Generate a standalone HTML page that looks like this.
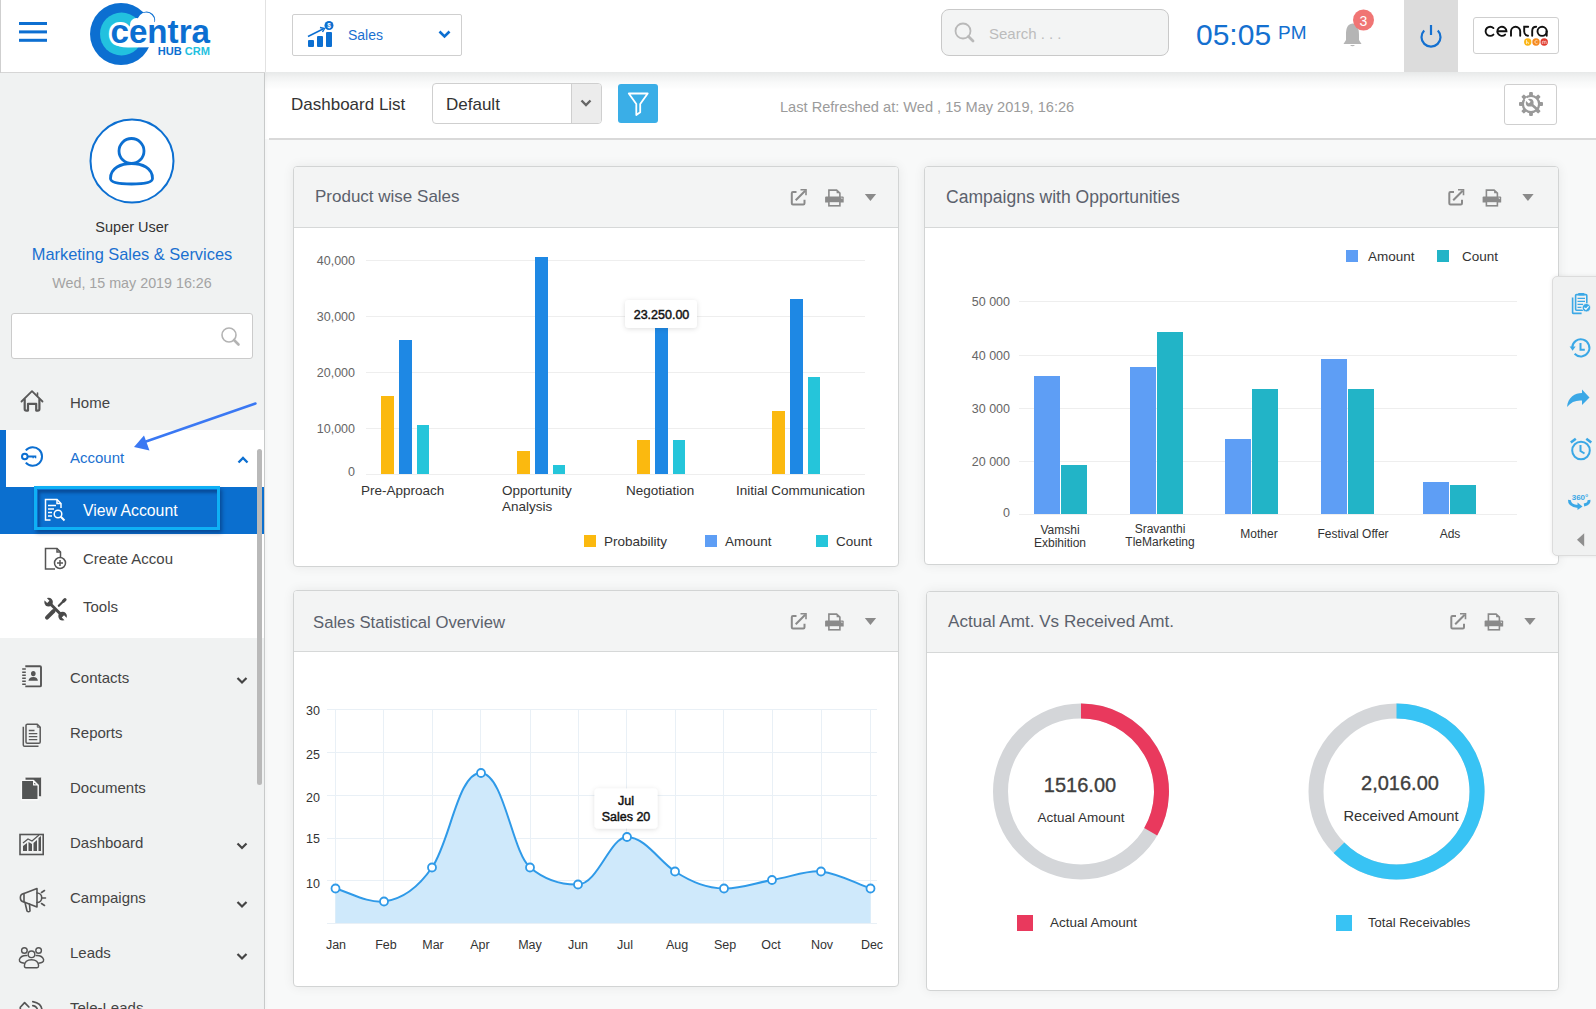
<!DOCTYPE html>
<html><head><meta charset="utf-8">
<style>
*{margin:0;padding:0;box-sizing:border-box}
html,body{width:1596px;height:1009px;overflow:hidden;background:#f8f9f9;font-family:"Liberation Sans",sans-serif;color:#333}
.a{position:absolute}
.t{position:absolute;white-space:nowrap;line-height:1}
.card{position:absolute;background:#fff;border:1px solid #d2d4d4;border-radius:4px;box-shadow:0 0 12px rgba(0,0,0,0.07);overflow:hidden}
.ch{position:absolute;left:0;top:0;right:0;background:#f3f4f4;border-bottom:1px solid #d6d8d8}
.ttl{position:absolute;font-size:17px;color:#5b616c;white-space:nowrap;line-height:1}
.mt{position:absolute;white-space:nowrap;line-height:1;font-size:15px;color:#444}
svg{position:absolute;overflow:visible}
</style></head>
<body>
<!-- HEADER -->
<div class="a" style="left:0;top:0;width:1596px;height:72px;background:#fff"></div>
<div class="a" style="left:0;top:72px;width:265px;height:1px;background:#d6d6d6"></div>
<div class="a" style="left:265px;top:0;width:1px;height:72px;background:#e2e2e2"></div>
<!-- hamburger -->
<svg style="left:0;top:0" width="60" height="72">
  <rect x="19" y="22" width="28" height="3" fill="#0d6fd1"/>
  <rect x="19" y="30.4" width="28" height="3" fill="#0d6fd1"/>
  <rect x="19" y="38.8" width="28" height="3" fill="#0d6fd1"/>
</svg>
<div class="a" style="left:0;top:0;width:1px;height:73px;background:#cfcfcf"></div>
<!-- logo -->
<svg style="left:0;top:0" width="266" height="72">
  <circle cx="121" cy="34" r="31" fill="#0c6fd1"/>
  <circle cx="121.5" cy="34" r="21.5" fill="#22c1df"/>
  <circle cx="146.6" cy="20" r="8.6" fill="#0c6fd1"/>
  <circle cx="146" cy="21" r="8.4" fill="#fff"/>
  <circle cx="121" cy="34" r="7" fill="#fff"/>
  <circle cx="136.5" cy="24.5" r="6.5" fill="#fff"/>
  <path d="M113 34 L113 43 Q118 47.6 128 47.6 L155 47.2 L149 36 Z" fill="#fff"/>
  <text x="110.5" y="43.2" font-family="Liberation Sans" font-weight="bold" font-size="33" fill="#0c6fd1" stroke="#fff" stroke-width="6" paint-order="stroke" stroke-linejoin="round" textLength="99.5" lengthAdjust="spacingAndGlyphs">centra</text>
  <text x="157.8" y="54.6" font-family="Liberation Sans" font-weight="bold" font-size="10.3" fill="#0c6fd1" textLength="24" lengthAdjust="spacingAndGlyphs">HUB</text>
  <text x="184.8" y="54.6" font-family="Liberation Sans" font-weight="bold" font-size="10.3" fill="#22c1df" textLength="25.2" lengthAdjust="spacingAndGlyphs">CRM</text>
</svg>
<!-- sales dropdown -->
<div class="a" style="left:292px;top:14px;width:170px;height:42px;border:1px solid #cfcfcf;border-radius:2px;background:#fff"></div>
<svg style="left:0;top:0" width="480" height="72">
  <rect x="308" y="40" width="6" height="7" rx="1" fill="#0c6fd1"/>
  <rect x="317" y="36" width="6" height="11" rx="1" fill="#0c6fd1"/>
  <rect x="326" y="32" width="6" height="15" rx="1" fill="#0c6fd1"/>
  <path d="M308 36.5 L323 29" stroke="#0c6fd1" stroke-width="1.5" fill="none"/>
  <path d="M320 27.5 L324.5 28.5 L322.5 32" stroke="#0c6fd1" stroke-width="1.5" fill="none"/>
  <circle cx="329" cy="25.5" r="4.5" fill="#0c6fd1"/>
  <text x="329" y="28" font-family="Liberation Sans" font-weight="bold" font-size="6.5" fill="#fff" text-anchor="middle">$</text>
  <path d="M439.5 31.5 L444.5 36.5 L449.5 31.5" stroke="#0c6fd1" stroke-width="2.6" fill="none"/>
</svg>
<div class="t" style="left:348px;top:28px;font-size:14px;color:#1a70d0">Sales</div>
<!-- search -->
<div class="a" style="left:941px;top:9px;width:228px;height:47px;border:1px solid #c9c9c9;border-radius:8px;background:#f3f4f4"></div>
<svg style="left:0;top:0" width="1200" height="72">
  <circle cx="963" cy="31" r="7.5" stroke="#b9b9b9" stroke-width="1.8" fill="none"/>
  <path d="M968.5 36.5 L973 41" stroke="#b9b9b9" stroke-width="2.8" stroke-linecap="round"/>
</svg>
<div class="t" style="left:989px;top:26px;font-size:15px;color:#bcbcbc;letter-spacing:0px">Search . . .</div>
<!-- time -->
<div class="t" style="left:1196px;top:20px;font-size:30px;color:#1470d0">05:05</div>
<div class="t" style="left:1278px;top:23px;font-size:19px;color:#1470d0">PM</div>
<!-- bell -->
<svg style="left:0;top:0" width="1400" height="72">
  <path d="M1352.5 23.5 C1347 24 1346 29 1346 35 L1346 40 L1343.5 44 L1361.5 44 L1359 40 L1359 35 C1359 29 1358 24 1352.5 23.5 Z" fill="#b5b5b5"/>
  <path d="M1350 45 Q1352.5 47.5 1355 45 Z" fill="#b5b5b5"/>
  <circle cx="1363.5" cy="20" r="10.5" fill="#f07574"/>
  <text x="1363.5" y="25.5" font-family="Liberation Sans" font-size="14" fill="#fff" text-anchor="middle">3</text>
</svg>
<!-- power -->
<div class="a" style="left:1404px;top:0;width:54px;height:72px;background:#dcdcdc"></div>
<svg style="left:0;top:0" width="1596" height="72">
  <path d="M1424.2 30.5 A9.5 9.5 0 1 0 1437.8 30.5" stroke="#1470d0" stroke-width="2.2" fill="none"/>
  <path d="M1431 25 L1431 35" stroke="#1470d0" stroke-width="2.2"/>
</svg>
<!-- centra logo box -->
<div class="a" style="left:1473px;top:17px;width:86px;height:37px;border:1px solid #cfcfcf;border-radius:3px;background:#fff"></div>
<svg style="left:0;top:0" width="1596" height="72">
  <g stroke="#111" stroke-width="1.9" fill="none" stroke-linecap="round">
    <path d="M1493.45 28.05 A4.6 4.6 0 1 0 1493.45 34.55"/>
    <path d="M1497.3 31.3 L1506.5 31.3 A4.6 4.6 0 1 0 1505.15 34.55"/>
    <path d="M1511 35.8 L1511 31.3 A4.6 4.6 0 0 1 1520.2 31.3 L1520.2 35.8"/>
    <path d="M1528.2 26.8 L1524.2 26.8 L1524.2 31.5 Q1524.2 35 1528 35.8"/>
    <path d="M1532.2 35.8 L1532.2 31 Q1532.2 26.8 1536.2 26.8"/>
    <circle cx="1542.1" cy="31.3" r="4.6"/>
    <path d="M1546.7 31.3 L1546.7 35.8"/>
  </g>
  <circle cx="1527.7" cy="42" r="3.7" fill="#fbb514"/>
  <circle cx="1536" cy="42" r="3.7" fill="#f58a1f"/>
  <circle cx="1544.2" cy="42" r="3.7" fill="#e0392b"/>
  <g stroke="#fff" stroke-width="0.8" fill="none" opacity="0.8">
    <path d="M1526.5 40 L1526.5 44 M1526.5 42.3 Q1528.5 41 1528.5 44"/>
    <path d="M1537.5 40.8 A1.6 1.6 0 1 0 1537.5 43.2"/>
    <path d="M1542.3 44 L1542.3 41.5 Q1543.3 40.8 1544.2 41.5 L1544.2 44 M1544.2 41.5 Q1545.2 40.8 1546.1 41.5 L1546.1 44"/>
  </g>
</svg>

<!-- MAIN TOOLBAR -->
<div class="a" style="left:265px;top:72px;width:1331px;height:67px;background:linear-gradient(#e7e9e9 0px,#f1f2f2 5px,#f9fafa 11px,#fdfdfd 16px,#fff 17px)"></div>
<div class="a" style="left:269px;top:138px;width:1327px;height:2px;background:#d9d9d9"></div>
<div class="t" style="left:291px;top:96px;font-size:17px;color:#333">Dashboard List</div>
<div class="a" style="left:432px;top:83px;width:170px;height:41px;border:1px solid #cfcfcf;border-radius:4px;background:#fff;overflow:hidden">
  <div class="a" style="left:138px;top:0;width:32px;height:41px;background:#ececec;border-left:1px solid #cfcfcf"></div>
</div>
<div class="t" style="left:446px;top:96px;font-size:17px;color:#333">Default</div>
<svg style="left:0;top:0" width="700" height="140">
  <path d="M581.5 100.5 L586 105 L590.5 100.5" stroke="#666" stroke-width="2.4" fill="none"/>
</svg>
<div class="a" style="left:618px;top:84px;width:40px;height:39px;background:#3aaee7;border-radius:3px"></div>
<svg style="left:0;top:0" width="700" height="140">
  <path d="M628.8 93.5 L647.7 93.5 L640.2 104 L640.2 112.3 L636.3 115 L636.3 104 Z" stroke="#fff" stroke-width="1.8" fill="none" stroke-linejoin="round"/>
</svg>
<div class="t" style="left:780px;top:100px;font-size:14.6px;color:#9b9b9b">Last Refreshed at: Wed , 15 May 2019, 16:26</div>
<div class="a" style="left:1504px;top:84px;width:53px;height:41px;border:1px solid #cfcfcf;border-radius:3px;background:#fff"></div>
<svg style="left:0;top:0" width="1596" height="140">
  <g transform="translate(1531,104)" fill="#999">
    <circle r="9.3"/>
    <g>
      <rect x="-1.9" y="-12" width="3.8" height="5" rx="1"/>
      <rect x="-1.9" y="-12" width="3.8" height="5" rx="1" transform="rotate(45)"/>
      <rect x="-1.9" y="-12" width="3.8" height="5" rx="1" transform="rotate(90)"/>
      <rect x="-1.9" y="-12" width="3.8" height="5" rx="1" transform="rotate(135)"/>
      <rect x="-1.9" y="-12" width="3.8" height="5" rx="1" transform="rotate(180)"/>
      <rect x="-1.9" y="-12" width="3.8" height="5" rx="1" transform="rotate(225)"/>
      <rect x="-1.9" y="-12" width="3.8" height="5" rx="1" transform="rotate(270)"/>
      <rect x="-1.9" y="-12" width="3.8" height="5" rx="1" transform="rotate(315)"/>
    </g>
    <circle r="7" fill="#fff"/>
    <circle cx="-1.3" cy="-1.3" r="3.9"/>
    <path d="M-1.3 -1.3 L-5.5 -5.5" stroke="#fff" stroke-width="2.6"/>
    <path d="M-0.5 -0.5 L5.8 5" stroke="#999" stroke-width="2.6"/>
  </g>
</svg>
<!-- SIDEBAR -->
<div class="a" style="left:0;top:73px;width:265px;height:936px;background:#f0f2f2"></div>
<div class="a" style="left:264px;top:73px;width:1px;height:936px;background:#c8caca;box-shadow:1px 0 3px rgba(0,0,0,0.06)"></div>
<!-- avatar -->
<svg style="left:0;top:0" width="265" height="300">
  <circle cx="132" cy="161" r="41.5" fill="#fff" stroke="#0c6fd1" stroke-width="2"/>
  <circle cx="131.5" cy="151" r="12.5" fill="none" stroke="#0c6fd1" stroke-width="2.8"/>
  <path d="M110.5 178.5 C110.5 168 121 163.5 131.5 163.5 C142 163.5 152.5 168 152.5 178.5 C152.5 183 142 184 131.5 184 C121 184 110.5 183 110.5 178.5 Z" fill="none" stroke="#0c6fd1" stroke-width="2.8"/>
</svg>
<div class="t" style="left:0;width:264px;text-align:center;top:220px;font-size:14.5px;color:#333">Super User</div>
<div class="t" style="left:0;width:264px;text-align:center;top:246px;font-size:16.4px;color:#1a70d0">Marketing Sales &amp; Services</div>
<div class="t" style="left:0;width:264px;text-align:center;top:276px;font-size:14.3px;color:#a3a3a3">Wed, 15 may 2019 16:26</div>
<!-- side search -->
<div class="a" style="left:11px;top:313px;width:242px;height:46px;border:1px solid #cbcbcb;border-radius:3px;background:#fff"></div>
<svg style="left:0;top:0" width="265" height="400">
  <circle cx="229" cy="335" r="7" stroke="#b3b3b3" stroke-width="1.6" fill="none"/>
  <path d="M234 340 L238.5 344.5" stroke="#b3b3b3" stroke-width="2.6" stroke-linecap="round"/>
</svg>
<!-- Home -->
<svg style="left:0;top:0" width="265" height="1009">
  <g stroke="#5a5a5a" fill="none" stroke-linejoin="round" stroke-linecap="round">
    <path d="M21.5 401.5 L32 391.2 L42.5 401.5" stroke-width="1.8"/>
    <path d="M24.7 399.5 L24.7 409 Q24.7 410.6 26.3 410.6 L28 410.6 L28 403.8 L36.2 403.8 L36.2 410.6 L37.8 410.6 Q39.4 410.6 39.4 409 L39.4 399.5" stroke-width="2.2"/>
    <path d="M37.5 393 L37.5 395.5" stroke-width="1.6"/>
  </g>
</svg>
<div class="mt" style="left:70px;top:395px">Home</div>
<!-- Account section (white) -->
<div class="a" style="left:0;top:430px;width:264px;height:208px;background:#fff"></div>
<div class="a" style="left:0;top:430px;width:6px;height:57px;background:#0c6fd1"></div>
<svg style="left:0;top:0" width="265" height="1009">
  <g stroke="#0c6fd1" stroke-width="2" fill="none">
    <path d="M25.8 450.3 A9.3 9.3 0 1 1 25.8 462.7"/>
    <circle cx="24.8" cy="456.5" r="2.8"/>
  </g>
  <path d="M27.5 455.5 L36.3 455.5 L36.3 458.3 L35 458.3 L35 457.5 L33.8 457.5 L33.8 458.3 L32.5 458.3 L32.5 457.5 L27.5 457.5 Z" fill="#0c6fd1"/>
</svg>
<div class="mt" style="left:70px;top:450px;color:#1a70d0">Account</div>
<svg style="left:0;top:0" width="265" height="1009">
  <path d="M238.5 462.5 L243 458 L247.5 462.5" stroke="#0c6fd1" stroke-width="2.4" fill="none"/>
</svg>
<!-- View Account -->
<div class="a" style="left:0;top:487px;width:264px;height:47px;background:#0b6fcf"></div>
<div class="a" style="left:34px;top:486px;width:186px;height:44px;border:3.5px solid #0fb0f5;box-shadow:2px 3px 4px rgba(0,0,40,0.35);background:#0b6fcf"></div>
<div class="a" style="left:37.5px;top:489.5px;width:179px;height:37px;box-shadow:inset 2px 3px 3px rgba(0,0,40,0.3)"></div>
<svg style="left:0;top:0" width="265" height="1009">
  <g stroke="#fff" stroke-width="1.5" fill="none">
    <path d="M50.5 520 L45.5 520 L45.5 499.5 L57 499.5 L61 503.5 L61 508"/>
    <path d="M57 499.5 L57 503.5 L61 503.5"/>
    <path d="M48 505.5 L56 505.5 M48 509 L54 509 M48 512.5 L52 512.5 M48 516 L52 516"/>
    <circle cx="58" cy="514" r="3.8"/>
    <path d="M60.8 516.8 L64.5 520.5" stroke-width="2"/>
  </g>
</svg>
<div class="mt" style="left:83px;top:503px;color:#fff;font-size:15.8px">View Account</div>
<!-- Create Account -->
<svg style="left:0;top:0" width="265" height="1009">
  <g stroke="#555" stroke-width="1.5" fill="none">
    <path d="M55 569 L45.5 569 L45.5 548.5 L57 548.5 L60.5 552 L60.5 557"/>
    <path d="M57 548.5 L57 552 L60.5 552"/>
    <circle cx="60" cy="563" r="5.5"/>
    <path d="M60 560 L60 566 M57 563 L63 563"/>
  </g>
</svg>
<div class="mt" style="left:83px;top:551px">Create Accou</div>
<!-- Tools -->
<svg style="left:0;top:0" width="265" height="1009">
  <g fill="#4a4a4a" stroke="none">
    <circle cx="48.6" cy="602.1" r="4.3"/>
    <circle cx="62.6" cy="616.1" r="4.3"/>
  </g>
  <path d="M49 602.5 L62.2 615.7" stroke="#4a4a4a" stroke-width="3"/>
  <path d="M48.3 601.8 L44 597.5 M62.9 616.4 L67.2 620.7" stroke="#fff" stroke-width="3.2"/>
  <path d="M64.8 599.8 L58.8 605.8" stroke="#4a4a4a" stroke-width="2.2" stroke-linecap="round"/>
  <path d="M65 599.6 L63.5 601.1" stroke="#4a4a4a" stroke-width="3.2" stroke-linecap="round"/>
  <path d="M53.6 611 L47 617.6" stroke="#4a4a4a" stroke-width="4" stroke-linecap="round"/>
</svg>
<div class="mt" style="left:83px;top:599px">Tools</div>
<!-- scrollbar -->
<div class="a" style="left:257px;top:449px;width:5px;height:336px;background:#b9b9b9;border-radius:3px"></div>
<!-- Contacts -->
<svg style="left:0;top:0" width="265" height="1009">
  <path d="M25.3 666.2 L40 666.2 Q41 666.2 41 667.2 L41 685.4 Q41 686.4 40 686.4 L25.3 686.4" stroke="#555" stroke-width="1.9" fill="none"/>
  <path d="M22.2 669.1 H25.8 M22.2 672.2 H25.8 M22.2 675.2 H25.8 M22.2 678.2 H25.8 M22.2 681.2 H25.8 M22.2 684.2 H25.8" stroke="#555" stroke-width="1.5"/>
  <ellipse cx="33.3" cy="673.6" rx="2.3" ry="2.7" fill="#555"/>
  <path d="M28.4 680.8 Q29 677.3 33.3 677 Q37.6 677.3 37.9 680.8 Z" fill="#555"/>
</svg>
<div class="mt" style="left:70px;top:670px">Contacts</div>
<!-- Reports -->
<svg style="left:0;top:0" width="265" height="1009">
  <g stroke="#5a5a5a" stroke-width="1.5" fill="none" stroke-linejoin="round">
    <path d="M23.3 726.8 L23.3 745 Q23.3 746.3 24.6 746.3 L38.5 746.3"/>
    <path d="M27 724.2 L37.3 724.2 L40.2 727.2 L40.2 742 Q40.2 743.3 38.9 743.3 L27.3 743.3 Q26 743.3 26 742 L26 725.5 Q26 724.2 27.3 724.2"/>
    <path d="M37.3 724.2 L37.3 727.2 L40.2 727.2" stroke-width="1"/>
    <path d="M28.8 730.5 H34.5 M28.8 733.6 H37.3 M28.8 736.6 H37.3 M28.8 739.6 H37.3" stroke-width="1.4"/>
  </g>
</svg>
<div class="mt" style="left:70px;top:725px">Reports</div>
<!-- Documents -->
<svg style="left:0;top:0" width="265" height="1009">
  <rect x="25" y="777.1" width="16.7" height="19.7" rx="0.8" fill="#545656" stroke="#fafafa" stroke-width="1"/>
  <path d="M21.4 780.4 L33.4 780.4 L38.2 785.2 L38.2 799.8 L21.4 799.8 Z" fill="#545656" stroke="#fafafa" stroke-width="1.4" stroke-linejoin="round"/>
  <path d="M33.6 781 L33.6 784.9 L37.5 784.9 Z" fill="#545656" stroke="#fafafa" stroke-width="1.2" stroke-linejoin="round"/>
</svg>
<div class="mt" style="left:70px;top:780px">Documents</div>
<!-- Dashboard -->
<svg style="left:0;top:0" width="265" height="1009">
  <rect x="20" y="834.5" width="23.2" height="20" fill="none" stroke="#555" stroke-width="1.6"/>
  <path d="M23 851 L23 846 L27 843 L27 851 Z M28.5 851 L28.5 842 L32 844 L32 851 Z M33.5 851 L33.5 843 L37 840 L37 851 Z M38.5 851 L38.5 838 L41 836 L41 851 Z" fill="#555"/>
  <path d="M23 843 L28 839 L32 841 L39 835" stroke="#555" stroke-width="1.2" fill="none"/>
</svg>
<div class="mt" style="left:70px;top:835px">Dashboard</div>
<!-- Campaigns -->
<svg style="left:0;top:0" width="265" height="1009">
  <g stroke="#555" stroke-width="1.6" fill="none" stroke-linejoin="round" stroke-linecap="round">
    <path d="M24 893.5 L37 888.5 L37 907 L24 902 Z"/>
    <path d="M24 893.5 A4.3 4.3 0 0 0 24 902"/>
    <path d="M37 893 A4.5 4.5 0 0 1 37 902.5"/>
    <path d="M25 902.5 L27 911 Q28.5 912.5 30 911 L29.5 904"/>
    <path d="M41.5 892.5 L44.5 890.5 M42 898 L45.5 898 M41.5 903.5 L44.5 905.5"/>
  </g>
</svg>
<div class="mt" style="left:70px;top:890px">Campaigns</div>
<!-- Leads -->
<svg style="left:0;top:0" width="265" height="1009">
  <g stroke="#555" stroke-width="1.4" fill="none">
    <circle cx="24.4" cy="950.5" r="2.8"/>
    <circle cx="38.6" cy="950.5" r="2.8"/>
    <circle cx="31.5" cy="954.3" r="3.3"/>
    <path d="M27.5 955.6 Q21 955 19.4 959.5 Q19 963 24.5 963.2"/>
    <path d="M35.5 955.6 Q42 955 43.6 959.5 Q44 963 38.5 963.2"/>
    <path d="M26 967.7 L37 967.7 Q38.6 967.7 38.6 965.8 Q38.2 959.8 31.5 959.8 Q24.8 959.8 24.4 965.8 Q24.4 967.7 26 967.7 Z"/>
  </g>
</svg>
<div class="mt" style="left:70px;top:945px">Leads</div>
<!-- Tele-leads -->
<svg style="left:0;top:0" width="265" height="1009">
  <g stroke="#555" stroke-width="1.7" fill="none" stroke-linejoin="round" stroke-linecap="round">
    <path d="M20.3 1010 L20.3 1007.3 L24.6 1002.6 L28.9 1007"/>
    <path d="M32.8 1001.6 Q41.3 1003 42.2 1010"/>
    <path d="M32.8 1005.6 Q37 1006.2 37.5 1010"/>
  </g>
</svg>
<div class="mt" style="left:70px;top:1000px">Tele-Leads</div>
<!-- chevrons -->
<svg style="left:0;top:0" width="265" height="1009">
  <g stroke="#444" stroke-width="2.2" fill="none">
    <path d="M237.5 678 L242 682.5 L246.5 678"/>
    <path d="M237.5 843.5 L242 848 L246.5 843.5"/>
    <path d="M237.5 902 L242 906.5 L246.5 902"/>
    <path d="M237.5 954 L242 958.5 L246.5 954"/>
  </g>
</svg>
<!-- arrow annotation -->
<svg style="left:0;top:0" width="265" height="1009">
  <path d="M255.5 403.5 L146 441.5" stroke="#3a78f3" stroke-width="2.4" stroke-linecap="round"/>
  <path d="M134 447 L144 435.5 L149.5 450.5 Z" fill="#3a78f3"/>
</svg>
<!-- CARD ICONS helper: drawn per card -->
<!-- CARD 1 -->
<div class="card" style="left:293px;top:166px;width:606px;height:401px">
  <div class="ch" style="height:61px"></div>
</div>
<div class="ttl" style="left:315px;top:188px">Product wise Sales</div>
<svg style="left:0;top:0" width="1596" height="1009">
  <g stroke="#eeeeee" stroke-width="1">
    <path d="M366 260.5 H865 M366 316.5 H865 M366 372.5 H865 M366 428.5 H865 M366 474.5 H865"/>
  </g>
  <g font-family="Liberation Sans" font-size="12.5" fill="#666" text-anchor="end">
    <text x="355" y="265">40,000</text>
    <text x="355" y="320.5">30,000</text>
    <text x="355" y="376.5">20,000</text>
    <text x="355" y="432.5">10,000</text>
    <text x="355" y="475.5">0</text>
  </g>
  <g>
    <rect x="381" y="396" width="13" height="78" fill="#fbb90f"/>
    <rect x="399" y="340" width="13" height="134" fill="#1e88e4"/>
    <rect x="417" y="425" width="12" height="49" fill="#25c5da"/>
    <rect x="517" y="451" width="13" height="23" fill="#fbb90f"/>
    <rect x="535" y="257" width="13" height="217" fill="#1e88e4"/>
    <rect x="553" y="465" width="12" height="9" fill="#25c5da"/>
    <rect x="637" y="440" width="13" height="34" fill="#fbb90f"/>
    <rect x="655" y="328" width="13" height="146" fill="#1e88e4"/>
    <rect x="673" y="440" width="12" height="34" fill="#25c5da"/>
    <rect x="772" y="411" width="13" height="63" fill="#fbb90f"/>
    <rect x="790" y="299" width="13" height="175" fill="#1e88e4"/>
    <rect x="808" y="377" width="12" height="97" fill="#25c5da"/>
  </g>
  <g font-family="Liberation Sans" font-size="13.5" fill="#333">
    <text x="361" y="495">Pre-Approach</text>
    <text x="502" y="495">Opportunity</text>
    <text x="502" y="511">Analysis</text>
    <text x="626" y="495">Negotiation</text>
    <text x="736" y="495">Initial Communication</text>
  </g>
  <defs><filter id="tsh" x="-30%" y="-50%" width="160%" height="200%"><feDropShadow dx="0" dy="1" stdDeviation="2.5" flood-color="#000" flood-opacity="0.13"/></filter></defs>
  <rect x="625" y="300" width="72" height="28" rx="4" fill="#fff" filter="url(#tsh)"/>
  <text x="661.5" y="319" font-family="Liberation Sans" font-size="12.5" fill="#111" stroke="#111" stroke-width="0.45" text-anchor="middle">23.250.00</text>
  <g font-family="Liberation Sans" font-size="13.5" fill="#333">
    <rect x="584" y="535" width="12" height="12" fill="#fbb90f"/>
    <text x="604" y="546">Probability</text>
    <rect x="705" y="535" width="12" height="12" fill="#5e9ef5"/>
    <text x="725" y="546">Amount</text>
    <rect x="816" y="535" width="12" height="12" fill="#25c5da"/>
    <text x="836" y="546">Count</text>
  </g>
</svg>

<!-- CARD 2 -->
<div class="card" style="left:924px;top:166px;width:635px;height:399px">
  <div class="ch" style="height:61px"></div>
</div>
<div class="ttl" style="left:946px;top:189px;font-size:17.55px">Campaigns with Opportunities</div>
<svg style="left:0;top:0" width="1596" height="1009">
  <g stroke="#eeeeee" stroke-width="1">
    <path d="M1019 301.5 H1517 M1019 355.5 H1517 M1019 408.5 H1517 M1019 461.5 H1517 M1019 514.5 H1517"/>
  </g>
  <g font-family="Liberation Sans" font-size="12.5" fill="#666" text-anchor="end">
    <text x="1010" y="306">50 000</text>
    <text x="1010" y="359.5">40 000</text>
    <text x="1010" y="412.5">30 000</text>
    <text x="1010" y="465.5">20 000</text>
    <text x="1010" y="517">0</text>
  </g>
  <g>
    <rect x="1034" y="376" width="26" height="138" fill="#5e9ef5"/>
    <rect x="1061" y="465" width="26" height="49" fill="#22b4c7"/>
    <rect x="1130" y="367" width="26" height="147" fill="#5e9ef5"/>
    <rect x="1157" y="332" width="26" height="182" fill="#22b4c7"/>
    <rect x="1225" y="439" width="26" height="75" fill="#5e9ef5"/>
    <rect x="1252" y="389" width="26" height="125" fill="#22b4c7"/>
    <rect x="1321" y="359" width="26" height="155" fill="#5e9ef5"/>
    <rect x="1348" y="389" width="26" height="125" fill="#22b4c7"/>
    <rect x="1423" y="482" width="26" height="32" fill="#5e9ef5"/>
    <rect x="1450" y="485" width="26" height="29" fill="#22b4c7"/>
  </g>
  <g font-family="Liberation Sans" font-size="12" fill="#333" text-anchor="middle">
    <text x="1060" y="534">Vamshi</text>
    <text x="1060" y="547">Exbihition</text>
    <text x="1160" y="533">Sravanthi</text>
    <text x="1160" y="546">TleMarketing</text>
    <text x="1259" y="538">Mother</text>
    <text x="1353" y="538">Festival Offer</text>
    <text x="1450" y="538">Ads</text>
  </g>
  <g font-family="Liberation Sans" font-size="13.5" fill="#333">
    <rect x="1346" y="250" width="12" height="12" fill="#5e9ef5"/>
    <text x="1368" y="261">Amount</text>
    <rect x="1437" y="250" width="12" height="12" fill="#22b4c7"/>
    <text x="1462" y="261">Count</text>
  </g>
</svg>

<!-- CARD 3 -->
<div class="card" style="left:293px;top:590px;width:606px;height:397px">
  <div class="ch" style="height:61px"></div>
</div>
<div class="ttl" style="left:313px;top:615px;font-size:16.7px">Sales Statistical Overview</div>
<svg style="left:0;top:0" width="1596" height="1009">
  <g stroke="#e9f0f6" stroke-width="1">
    <path d="M327 709.5 H877 M327 752.5 H877 M327 795.5 H877 M327 838.5 H877 M327 880.5 H877 M327 923.5 H877"/>
    <path d="M335.5 709 V924 M383.5 709 V924 M432.5 709 V924 M480.5 709 V924 M530.5 709 V924 M578.5 709 V924 M626.5 709 V924 M675.5 709 V924 M723.5 709 V924 M772.5 709 V924 M821.5 709 V924 M870.5 709 V924"/>
  </g>
  <g font-family="Liberation Sans" font-size="12.5" fill="#333">
    <text x="306" y="715">30</text>
    <text x="306" y="759">25</text>
    <text x="306" y="802">20</text>
    <text x="306" y="843">15</text>
    <text x="306" y="888">10</text>
  </g>
  <path d="M335.5 888.5 C351 893 367 903 384 901.5 C404 899 420 885 432 867.5 C450 842 458 772 481 773 C504 774 512 852 530 867.5 C545 880 560 885 578 884.5 C598 884 610 837 627 837 C645 837 660 862 675 871.5 C693 883 707 888 724 888.5 C740 889 755 883 772 880 C790 877 808 870 821 871.5 C840 874 855 883 870.5 888.5 L870.5 923 L335.5 923 Z" fill="#cfe9fb"/>
  <path d="M335.5 888.5 C351 893 367 903 384 901.5 C404 899 420 885 432 867.5 C450 842 458 772 481 773 C504 774 512 852 530 867.5 C545 880 560 885 578 884.5 C598 884 610 837 627 837 C645 837 660 862 675 871.5 C693 883 707 888 724 888.5 C740 889 755 883 772 880 C790 877 808 870 821 871.5 C840 874 855 883 870.5 888.5" fill="none" stroke="#2f9ae8" stroke-width="2"/>
  <g fill="#fff" stroke="#2f9ae8" stroke-width="1.8">
    <circle cx="335.5" cy="888.5" r="4"/>
    <circle cx="384" cy="901.5" r="4"/>
    <circle cx="432" cy="867.5" r="4"/>
    <circle cx="481" cy="773" r="4"/>
    <circle cx="530" cy="867.5" r="4"/>
    <circle cx="578" cy="884.5" r="4"/>
    <circle cx="627" cy="837" r="4"/>
    <circle cx="675" cy="871.5" r="4"/>
    <circle cx="724" cy="888.5" r="4"/>
    <circle cx="772" cy="880" r="4"/>
    <circle cx="821" cy="871.5" r="4"/>
    <circle cx="870.5" cy="888.5" r="4"/>
  </g>
  <g font-family="Liberation Sans" font-size="12.5" fill="#333" text-anchor="middle">
    <text x="336" y="949">Jan</text>
    <text x="386" y="949">Feb</text>
    <text x="433" y="949">Mar</text>
    <text x="480" y="949">Apr</text>
    <text x="530" y="949">May</text>
    <text x="578" y="949">Jun</text>
    <text x="625" y="949">Jul</text>
    <text x="677" y="949">Aug</text>
    <text x="725" y="949">Sep</text>
    <text x="771" y="949">Oct</text>
    <text x="822" y="949">Nov</text>
    <text x="872" y="949">Dec</text>
  </g>
  <rect x="594.5" y="788.5" width="63" height="40" rx="4" fill="#fff" filter="url(#tsh)"/>
  <g font-family="Liberation Sans" font-size="12.5" fill="#111" stroke="#111" stroke-width="0.45" text-anchor="middle">
    <text x="626" y="805">Jul</text>
    <text x="626" y="821">Sales 20</text>
  </g>
</svg>

<!-- CARD 4 -->
<div class="card" style="left:926px;top:591px;width:633px;height:400px">
  <div class="ch" style="height:61px"></div>
</div>
<div class="ttl" style="left:948px;top:613px;font-size:17.1px">Actual Amt. Vs Received Amt.</div>
<svg style="left:0;top:0" width="1596" height="1009">
  <circle cx="1081" cy="791.5" r="80.5" fill="none" stroke="#d4d6d9" stroke-width="15"/>
  <path d="M1081 711 A80.5 80.5 0 0 1 1150.7 831.75" fill="none" stroke="#e9395d" stroke-width="15"/>
  <circle cx="1396.5" cy="791.5" r="80.5" fill="none" stroke="#d4d6d9" stroke-width="15"/>
  <path d="M1396.5 711 A80.5 80.5 0 1 1 1339 847.8" fill="none" stroke="#38c3f4" stroke-width="15"/>
  <g font-family="Liberation Sans" fill="#333" text-anchor="middle">
    <text x="1080" y="792" font-size="20" fill="#404040" stroke="#404040" stroke-width="0.35">1516.00</text>
    <text x="1081" y="822" font-size="13.5">Actual Amount</text>
    <text x="1400" y="790" font-size="20" fill="#404040" stroke="#404040" stroke-width="0.35">2,016.00</text>
    <text x="1401" y="821" font-size="14.7">Received Amount</text>
  </g>
  <rect x="1017" y="915" width="16" height="16" fill="#e9395d"/>
  <rect x="1336" y="915" width="16" height="16" fill="#38c3f4"/>
  <g font-family="Liberation Sans" fill="#333" font-size="13.5">
    <text x="1050" y="927">Actual Amount</text>
    <text x="1368" y="927" font-size="13.05">Total Receivables</text>
  </g>
</svg>

<!-- card header icons -->
<svg style="left:0;top:0" width="1596" height="1009">
  <defs>
    <g id="ico">
      <g stroke="#8a8a8a" stroke-width="2" fill="none" stroke-linejoin="round">
        <path d="M-1.5 -5.5 L-5 -5.5 Q-6.2 -5.5 -6.2 -4.3 L-6.2 5.8 Q-6.2 7 -5 7 L5.3 7 Q6.5 7 6.5 5.8 L6.5 2.3"/>
        <path d="M-2.3 2.8 L7.2 -6.7"/>
      </g>
      <path d="M2.5 -8.5 L8.8 -8.5 L8.8 -2.2 L7.2 -2.2 L7.2 -6.9 L2.5 -6.9 Z" fill="#8a8a8a"/>
      <g transform="translate(36.4,0)">
        <path d="M-5.5 -0.5 L-5.5 -7.4 L2.2 -7.4 L5.5 -4.3 L5.5 -0.5" fill="none" stroke="#8a8a8a" stroke-width="1.6"/>
        <path d="M2.2 -7.4 L5.5 -4.3 L2.2 -4.3 Z" fill="#8a8a8a"/>
        <path d="M-8.3 -1 Q-9.3 -1 -9.3 0 L-9.3 5 L9.3 5 L9.3 0 Q9.3 -1 8.3 -1 Z" fill="#8a8a8a"/>
        <rect x="-5.5" y="3.9" width="11" height="4.4" fill="#f3f4f4" stroke="#8a8a8a" stroke-width="1.6"/>
        <path d="M6.2 0.3 L8 0.3 L8 1.8 Z" fill="#f3f4f4"/>
      </g>
      <path d="M66.8 -3.4 L78.1 -3.4 L72.45 3.5 Z" fill="#8a8a8a"/>
    </g>
  </defs>
  <use href="#ico" x="798" y="197.5"/>
  <use href="#ico" x="1455.5" y="197.5"/>
  <use href="#ico" x="798" y="621.5"/>
  <use href="#ico" x="1457.5" y="621.5"/>
</svg>

<!-- right floating panel -->
<div class="a" style="left:1552px;top:276px;width:50px;height:280px;background:#f0f1f1;border:1px solid #dcdcdc;border-radius:5px 0 0 5px;box-shadow:0 0 4px rgba(0,0,0,0.08)"></div>
<svg style="left:0;top:0" width="1596" height="1009">
  <g stroke="#3ba8e6" stroke-width="1.6" fill="none">
    <path d="M1572.6 297.6 L1572.6 312.8 Q1572.6 313.4 1573.2 313.4 L1581.6 313.4"/>
    <rect x="1575.6" y="294.6" width="11.2" height="15.6" rx="1"/>
    <path d="M1577.5 298.4 L1585 298.4 M1577.5 301.4 L1585 301.4 M1577.5 304.4 L1583 304.4 M1577.5 307.4 L1581.5 307.4" stroke-width="1.3"/>
  </g>
  <rect x="1578" y="293" width="6.6" height="2.4" rx="1" fill="#3ba8e6"/>
  <circle cx="1586.4" cy="307.7" r="4.2" fill="#3ba8e6" stroke="#f0f1f1" stroke-width="0.8"/>
  <path d="M1584.3 307.8 L1585.9 309.3 L1588.6 306.4" stroke="#fff" stroke-width="1.2" fill="none"/>
  <g stroke="#3ba8e6" stroke-width="2" fill="none">
    <path d="M1572.2 347.5 A8.6 8.6 0 1 1 1574.6 353.8"/>
    <path d="M1580.5 343 L1580.5 349.8 L1584.8 349.8"/>
  </g>
  <path d="M1569.6 346.6 L1575.6 346.6 L1572.6 350.8 Z" fill="#3ba8e6"/>
  <path d="M1567 407 C1568 397 1575 393 1582 393 L1582 389.5 L1589.5 397.5 L1582 405 L1582 400.5 C1576 400 1571 402 1567 407 Z" fill="#3ba8e6"/>
  <g stroke="#3ba8e6" stroke-width="2" fill="none">
    <circle cx="1581" cy="450.5" r="8.8"/>
    <path d="M1580.5 445 L1580.5 451 L1584.5 453.5"/>
    <path d="M1570.8 442.5 L1575.8 438.8 M1586.3 438.8 L1591.3 442.5" stroke-width="2.6"/>
  </g>
  <text x="1580" y="500" font-family="Liberation Sans" font-size="8" font-weight="bold" fill="#3ba8e6" text-anchor="middle">360°</text>
  <g stroke="#3ba8e6" stroke-width="3" fill="none">
    <path d="M1569.5 500 Q1569 505.5 1578 506.5"/>
    <path d="M1589 500 Q1589.5 504 1584 505"/>
  </g>
  <path d="M1577.5 502.5 L1582.5 506.5 L1577.5 510 Z" fill="#3ba8e6"/>
  <path d="M1584.2 533.2 L1584.2 546.4 L1577 539.8 Z" fill="#8f8f8f"/>
</svg>
</body></html>
